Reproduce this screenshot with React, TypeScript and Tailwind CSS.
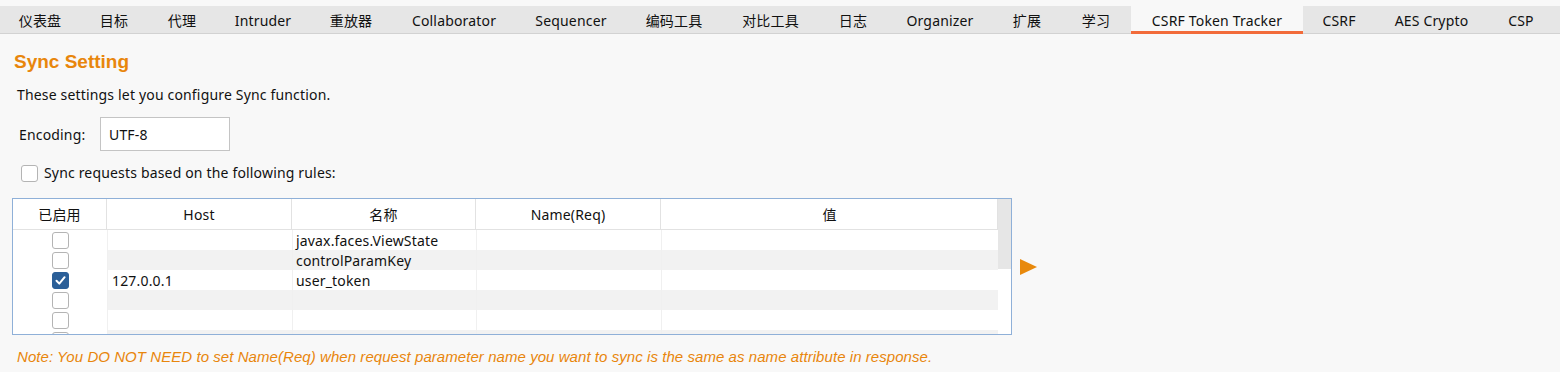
import React from "react";

const UI_FONT = "font-['Noto_Sans','Noto_Sans_CJK_SC',sans-serif]";

const tabs: { label: string; w: string; active?: boolean }[] = [
  { label: "仪表盘", w: "w-[80px]" },
  { label: "目标", w: "w-[68px]" },
  { label: "代理", w: "w-[68px]" },
  { label: "Intruder", w: "w-[94px]" },
  { label: "重放器", w: "w-[82px]" },
  { label: "Collaborator", w: "w-[124px]" },
  { label: "Sequencer", w: "w-[110px]" },
  { label: "编码工具", w: "w-[96px]" },
  { label: "对比工具", w: "w-[97px]" },
  { label: "日志", w: "w-[68px]" },
  { label: "Organizer", w: "w-[106px]" },
  { label: "扩展", w: "w-[68px]" },
  { label: "学习", w: "w-[70px]" },
  { label: "CSRF Token Tracker", w: "w-[172px]", active: true },
  { label: "CSRF", w: "w-[72px]" },
  { label: "AES Crypto", w: "w-[113px]" },
  { label: "CSP", w: "w-[66px]" },
];

function Check({ checked }: { checked?: boolean }) {
  if (checked) {
    return (
      <div className="w-[17px] h-[17px] shrink-0 rounded-[3px] bg-[#2b5f98] border border-[#2b5f98] flex items-center justify-center">
        <svg width="13" height="13" viewBox="0 0 13 13">
          <path d="M2.5 6.8 L5.3 9.6 L10.6 3.2" fill="none" stroke="#fff" strokeWidth="2" strokeLinecap="round" strokeLinejoin="round" />
        </svg>
      </div>
    );
  }
  return <div className="w-[17px] h-[17px] shrink-0 rounded-[3px] bg-white border-[1.5px] border-[#b4b4b4]" />;
}

const rows = [
  { on: false, host: "", name: "javax.faces.ViewState", req: "", val: "" },
  { on: false, host: "", name: "controlParamKey", req: "", val: "" },
  { on: true, host: "127.0.0.1", name: "user_token", req: "", val: "" },
  { on: false, host: "", name: "", req: "", val: "" },
  { on: false, host: "", name: "", req: "", val: "" },
  { on: false, host: "", name: "", req: "", val: "" },
];

const cols = "grid grid-cols-[94px_185px_184px_185px_337px]";

export default function App() {
  return (
    <div className={`w-[1560px] h-[372px] overflow-hidden bg-[#f8f8f8] text-[#111] tracking-[0.17px] ${UI_FONT}`}>
      <div className="h-[6px] bg-[#f8f8f8]" />
      <div className="flex h-[28px] bg-[#e6e6e6] border-b border-[#d2d2d2]">
        {tabs.map((t) => (
          <div
            key={t.label}
            className={`${t.w} h-[28px] shrink-0 flex items-center justify-center text-[14px] whitespace-nowrap ${
              t.active ? "bg-[#f8f8f8] shadow-[inset_0_-3px_0_#f26b3a]" : ""
            }`}
          >
            {t.label}
          </div>
        ))}
      </div>

      <div className="pl-[12px]">
        <div className="pt-[16px] pl-[2px] font-['Liberation_Sans',Arial,sans-serif] font-bold text-[19px] leading-[24px] tracking-normal text-[#e8860c]">
          Sync Setting
        </div>
        <div className="mt-[11px] pl-[5px] text-[14px] leading-[20px]">These settings let you configure Sync function.</div>
        <div className="mt-[12px] pl-[7px] flex items-center">
          <span className="w-[81px] text-[14px]">Encoding:</span>
          <div className="w-[130px] h-[34px] bg-white border border-[#c4c4c4] flex items-center pl-[8px] text-[14px]">UTF-8</div>
        </div>
        <div className="mt-[13px] pl-[9px] h-[18px] flex items-center gap-[6px]">
          <Check />
          <span className="text-[14px] leading-[18px]">Sync requests based on the following rules:</span>
        </div>

        <div className="mt-[16px] flex items-center gap-[8px]">
          <div className="w-[1000px] h-[137px] border border-[#8fb0d8] bg-white flex overflow-hidden">
            <div className="w-[985px] flex flex-col">
              <div className={`${cols} h-[31px] shrink-0 border-b border-[#e2e2e2] border-r border-r-[#e2e2e2] text-[14px]`}>
                {["已启用", "Host", "名称", "Name(Req)", "值"].map((h, i) => (
                  <div
                    key={h}
                    className={`flex items-center justify-center ${i < 4 ? "border-r border-[#e2e2e2]" : ""}`}
                  >
                    {h}
                  </div>
                ))}
              </div>
              {rows.map((r, idx) => (
                <div key={idx} className={`${cols} h-[20px] shrink-0 text-[14px]`}>
                  <div className="flex items-start justify-center pt-[2px] bg-white">
                    <Check checked={r.on} />
                  </div>
                  <div className={`px-[4px] leading-[21px] border-l border-[#f0f0f0] ${idx % 2 ? "bg-[#f2f2f2]" : "bg-white"}`}>{r.host}</div>
                  <div className={`px-[3px] leading-[21px] border-l border-[#f0f0f0] ${idx % 2 ? "bg-[#f2f2f2]" : "bg-white"}`}>{r.name}</div>
                  <div className={`px-[4px] leading-[21px] border-l border-[#f0f0f0] ${idx % 2 ? "bg-[#f2f2f2]" : "bg-white"}`}>{r.req}</div>
                  <div className={`px-[4px] leading-[21px] border-l border-[#f0f0f0] ${idx % 2 ? "bg-[#f2f2f2]" : "bg-white"}`}>{r.val}</div>
                </div>
              ))}
            </div>
            <div className="w-[13px] flex flex-col">
              <div className="h-[70px] bg-[#e6e6e6]" />
              <div className="flex-1 bg-white" />
            </div>
          </div>
          <svg width="17" height="16" viewBox="0 0 17 16">
            <polygon points="0,0 17,8 0,16" fill="#e8890c" />
          </svg>
        </div>

        <div className="mt-[13px] pl-[5px] font-['Liberation_Sans',Arial,sans-serif] italic text-[15px] leading-[18px] tracking-[0.06px] text-[#e8860c]">
          Note: You DO NOT NEED to set Name(Req) when request parameter name you want to sync is the same as name attribute in response.
        </div>
      </div>
    </div>
  );
}
